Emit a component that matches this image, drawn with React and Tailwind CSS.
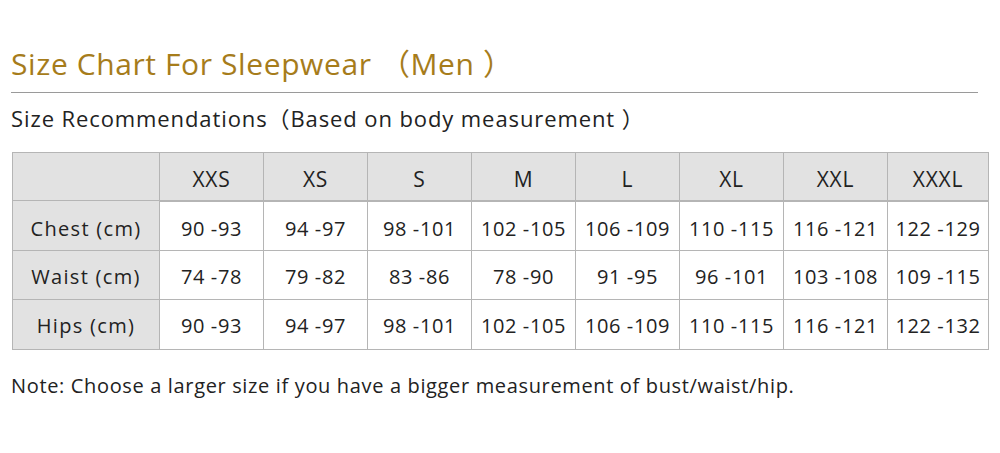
const sizes = ['XXS', 'XS', 'S', 'M', 'L', 'XL', 'XXL', 'XXXL']

const rows = [
  { label: 'Chest (cm)', h: 'h-[50px]', pt: 'pt-[7px]', values: ['90 -93', '94 -97', '98 -101', '102 -105', '106 -109', '110 -115', '116 -121', '122 -129'] },
  { label: 'Waist (cm)', h: 'h-[49px]', pt: 'pt-[4px]', values: ['74 -78', '79 -82', '83 -86', '78 -90', '91 -95', '96 -101', '103 -108', '109 -115'] },
  { label: 'Hips (cm)', h: 'h-[50px]', pt: 'pt-[2px]', values: ['90 -93', '94 -97', '98 -101', '102 -105', '106 -109', '110 -115', '116 -121', '122 -132'] },
]

export default function App() {
  return (
    <div className="w-[1000px] h-[453px] bg-white text-[#222] font-['Open_Sans','Noto_Sans_CJK_SC',sans-serif] pt-[44px] px-[11px]">
      {/* Title */}
      <h1 className="text-[30px] leading-[40px] tracking-[0.6px] text-[#a67c1b] pb-[8px] border-b border-[#9a9a9a] mr-[11px]">
        Size Chart For Sleepwear （Men ）
      </h1>
      <p className="text-[22px] leading-[28px] tracking-[0.9px] mt-[11px]">
        Size Recommendations（Based on body measurement ）
      </p>

      {/* Table */}
      <table className="mt-[20px] ml-px border-collapse table-fixed w-[976px] text-[20px] tracking-[0.6px] text-[#222]">
        <colgroup>
          <col className="w-[147px]" />
          {sizes.map((s, i) => (
            <col key={s} className={i === sizes.length - 1 ? 'w-[101px]' : 'w-[104px]'} />
          ))}
        </colgroup>
        <thead>
          <tr className="h-[48px] bg-[#e2e2e2]">
            <th className="border border-[#b5b5b5] font-normal" />
            {sizes.map(s => (
              <th key={s} className="border border-[#b5b5b5] border-b-2 font-normal pt-[6px] text-[21px] tracking-[0.8px]">{s}</th>
            ))}
          </tr>
        </thead>
        <tbody>
          {rows.map(r => (
            <tr key={r.label} className={r.h}>
              <td className={`border border-[#b5b5b5] bg-[#e2e2e2] text-center tracking-[1.3px] ${r.pt}`}>{r.label}</td>
              {r.values.map((v, i) => (
                <td key={i} className={`border border-[#b5b5b5] text-center ${r.pt}`}>{v}</td>
              ))}
            </tr>
          ))}
        </tbody>
      </table>

      <p className="text-[20px] leading-[26px] mt-[23px] tracking-[0.65px]">
        Note: Choose a larger size if you have a bigger measurement of bust/waist/hip.
      </p>
    </div>
  )
}
